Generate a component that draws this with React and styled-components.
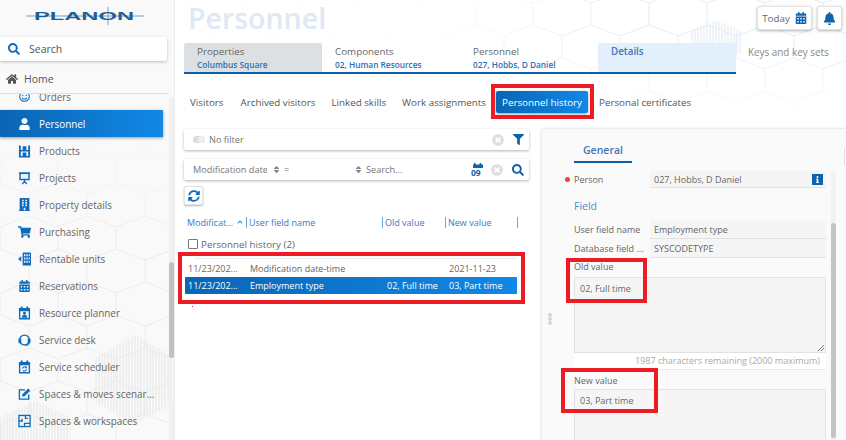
import React from 'react'
import styled, { createGlobalStyle } from 'styled-components'
import {
  FaBell, FaBuilding, FaCalendarAlt, FaChevronUp, FaFilter, FaHome, FaInfo, FaRegSmile,
  FaSearch, FaShoppingCart, FaSort, FaSyncAlt, FaTimesCircle, FaUser,
} from 'react-icons/fa'

const svgUrl = (markup) => `url("data:image/svg+xml,${encodeURIComponent(markup)}")`

// flattened hexagon tile used behind the sidebar and the page header
const hex = (stroke) =>
  svgUrl(`<svg xmlns='http://www.w3.org/2000/svg' width='58' height='66'><path d='M0 11 29 0 58 11M0 11V33M0 33 29 44 58 33M29 44V66M58 11V33' fill='none' stroke='${stroke}' stroke-width='1'/></svg>`)

const patch = (stroke, w, h) =>
  svgUrl(`<svg xmlns='http://www.w3.org/2000/svg' width='${w}' height='${h}'><defs><pattern id='p' width='3' height='3' patternUnits='userSpaceOnUse'><path d='M1 0V3' stroke='${stroke}'/></pattern></defs><polygon points='${w / 2} 0 ${w} ${h / 4} ${w} ${(h * 3) / 4} ${w / 2} ${h} 0 ${(h * 3) / 4} 0 ${h / 4}' fill='url(#p)'/></svg>`)

const GlobalStyle = createGlobalStyle`
  html, body { margin: 0; padding: 0; }
  body {
    width: 846px;
    height: 440px;
    overflow: hidden;
    font-family: "Open Sans", "Liberation Sans", sans-serif;
    font-size: 9px;
    color: #555;
    background: #fff;
  }
`

const Page = styled.div`
  position: relative;
  display: flex;
  width: 846px;
  height: 440px;
  overflow: hidden;
`

const Sidebar = styled.aside`
  flex: 0 0 175px;
  display: flex;
  flex-direction: column;
  height: 440px;
  background-color: #f9f9f9;
  background-image: linear-gradient(to bottom, #f9f9f9 120px, rgba(249, 249, 249, 0) 240px),
    ${patch('#e6e6e6', 80, 90)}, ${patch('#e6e6e6', 70, 70)}, ${hex('#ececec')};
  background-repeat: no-repeat, no-repeat, no-repeat, repeat;
  background-position: 0 0, 95px 335px, 0 400px, 0 150px;
  border-right: 1px solid #ececec;
  box-sizing: border-box;
`

const Logo = styled.div`
  height: 37px;
  display: flex;
  justify-content: center;
  padding-top: 7px;
  box-sizing: border-box;
  margin-right: 5px;
`

const SearchBox = styled.div`
  display: flex;
  align-items: center;
  gap: 9px;
  width: 167px;
  height: 24px;
  padding-left: 8px;
  box-sizing: border-box;
  background: #fff;
  border-radius: 0 3px 3px 0;
  box-shadow: 0 1px 3px rgba(0, 0, 0, 0.25);
  font-size: 10.5px;
  color: #555;
  svg { color: #0f6cbd; }
`

const HomeRow = styled.div`
  display: flex;
  align-items: center;
  gap: 6px;
  width: 169px;
  height: 33px;
  padding: 3px 0 0 6px;
  box-sizing: border-box;
  border-bottom: 1px solid #dedede;
  font-size: 10.5px;
  svg { color: #555; }
`

const NavArea = styled.div`
  flex: 1;
  display: flex;
  min-height: 0;
`

const NavList = styled.nav`
  width: 169px;
  height: 346px;
  overflow: hidden;
`

const NavTrack = styled.div`
  margin-top: 3px;
  width: 5px;
  height: 343px;
  background: #f1f1f1;
  display: flex;
  flex-direction: column;
`

const NavThumb = styled.div`
  margin-top: 165px;
  height: 96px;
  background: #c1c1c1;
  border-radius: 3px;
`

const NavItem = styled.div`
  display: flex;
  align-items: center;
  width: 163px;
  height: 27px;
  box-sizing: border-box;
  padding-left: 18px;
  gap: 8px;
  font-size: 9.9px;
  white-space: nowrap;
  color: ${(p) => (p.$active ? '#fff' : '#666')};
  background: ${(p) => (p.$active ? 'linear-gradient(90deg, #0a65b4, #1188e6)' : 'none')};
  box-shadow: ${(p) => (p.$active ? '0 1px 3px rgba(0,0,0,.4)' : 'none')};
  margin-top: ${(p) => (p.$first ? '-11px' : '0')};
  svg { flex: 0 0 13px; color: ${(p) => (p.$active ? '#fff' : '#0f6cbd')}; }
`

const Main = styled.main`
  flex: 1;
  min-width: 0;
  background-color: #fff;
  background-image: linear-gradient(to bottom, rgba(255, 255, 255, 0) 40px, #fff 125px),
    linear-gradient(to right, rgba(255, 255, 255, 0.85) 40%, rgba(255, 255, 255, 0) 70%),
    ${patch('#dfe9f2', 50, 44)}, ${hex('#e3edf6')};
  background-repeat: no-repeat, no-repeat, no-repeat, repeat;
  background-position: 0 0, 0 0, 516px 20px, 10px -8px;
  padding-left: 9px;
  position: relative;
`

const TopBar = styled.header`
  display: flex;
  justify-content: space-between;
  align-items: flex-start;
  height: 43px;
`

const Title = styled.h1`
  margin: 0 0 0 4px;
  font-size: 28.5px;
  line-height: 37px;
  font-weight: 600;
  color: #dde9f4;
`

const TopActions = styled.div`
  display: flex;
  gap: 5px;
  padding: 6px 4px 0 0;
`

const TopButton = styled.button`
  display: flex;
  align-items: center;
  justify-content: center;
  gap: 5px;
  width: ${(p) => p.$w}px;
  height: 24px;
  padding: 0;
  border: 1px solid #e2e2e2;
  border-radius: 3px;
  background: #fff;
  box-shadow: 0 1px 3px rgba(0, 0, 0, 0.3);
  font: 9.8px "Open Sans", sans-serif;
  color: #666;
  svg { color: #0f62ac; }
`

const TabStrip = styled.div`
  display: flex;
  height: 31px;
`

const TabRow = styled.div`
  display: flex;
  width: 552px;
  border-bottom: 2px solid #0a5dab;
  height: 31px;
  box-sizing: border-box;
`

const Tab = styled.div`
  width: 138px;
  height: 29px;
  box-sizing: border-box;
  padding: 2px 0 0 13px;
  border-radius: 2px 2px 0 0;
  background: ${(p) => p.$bg || 'none'};
  line-height: 14px;
  font-size: 9.8px;
  color: #666;
`

const TabLabel = styled.div`
  color: ${(p) => (p.$blue ? '#3a77b8' : '#666')};
  font-weight: ${(p) => (p.$blue ? 600 : 400)};
`

const TabSub = styled.div`
  font-size: 8.3px;
  line-height: 11px;
  font-weight: 600;
  color: #2a70b8;
`

const TabExtra = styled.div`
  padding: 2px 0 0 12px;
  font-size: 9.9px;
  line-height: 14px;
  color: #888;
  white-space: nowrap;
`

const SubTabs = styled.div`
  display: flex;
  align-items: center;
  height: 22px;
  margin-top: 17px;
  padding-left: 6px;
`

const SubTab = styled.div`
  display: flex;
  align-items: center;
  height: 22px;
  margin-right: ${(p) => p.$gap}px;
  padding: ${(p) => (p.$active ? '0 6px' : '0')};
  border-radius: 2px;
  font-size: 9.8px;
  white-space: nowrap;
  color: ${(p) => (p.$active ? '#fff' : '#555')};
  background: ${(p) => (p.$active ? 'linear-gradient(90deg, #0a65b4, #1188e6)' : 'none')};
  box-shadow: ${(p) => (p.$active ? '0 1px 3px rgba(0,0,0,.4)' : 'none')};
`

const Content = styled.div`
  display: flex;
  margin-top: 16px;
`

const ListPane = styled.section`
  flex: 0 0 345px;
`

const BarCard = styled.div`
  display: flex;
  align-items: center;
  height: 21px;
  margin-bottom: ${(p) => p.$mb || 0}px;
  padding: 0 5px 0 9px;
  background: #fff;
  border-radius: 2px;
  box-shadow: 0 1px 3px rgba(0, 0, 0, 0.3);
  font-size: 9.2px;
  color: #777;
`

const Toggle = styled.span`
  position: relative;
  width: 12px;
  height: 7px;
  margin-right: 4px;
  border-radius: 4px;
  background: #dcdcdc;

  &::after {
    content: '';
    position: absolute;
    right: 0;
    top: 0;
    width: 7px;
    height: 7px;
    border-radius: 50%;
    background: #eee;
  }
`

const Grow = styled.span`
  flex: 1;
  white-space: nowrap;
`

const ClearIcon = styled(FaTimesCircle)`
  color: #dedede;
  margin-right: 9px;
`

const BlueIcon = styled.span`
  display: flex;
  color: #0f62ac;
  margin-right: ${(p) => p.$mr || 0}px;
`

const SortSelect = styled.span`
  display: flex;
  align-items: center;
  width: ${(p) => p.$w}px;
  white-space: nowrap;
  svg { color: #888; }
`

const SortText = styled.span`
  width: 74px;
  margin-right: 5px;
  overflow: hidden;
`

const SortEq = styled.span`
  margin-left: 3px;
`

const RefreshButton = styled.button`
  display: flex;
  align-items: center;
  justify-content: center;
  width: 19px;
  height: 19px;
  margin-top: 6px;
  padding: 0;
  border: 1px solid #e4e4e4;
  border-radius: 2px;
  background: #fff;
  box-shadow: 0 1px 2px rgba(0, 0, 0, 0.3);
  color: #0f6cbd;
`

const GridHead = styled.div`
  display: grid;
  grid-template-columns: 59px 136px 63px 72px 1px;
  align-items: center;
  height: 12px;
  margin: 11px 0 0 3px;
  font-size: 9px;
  color: #3a7abd;
`

const HeadCell = styled.div`
  display: flex;
  align-items: center;
  height: 11px;
  padding-left: ${(p) => (p.$first ? 0 : 2)}px;
  border-left: ${(p) => (p.$first ? 'none' : '1px solid #6aa2d4')};
  white-space: nowrap;
  svg { margin-left: 4px; }
`

const GroupRow = styled.div`
  display: flex;
  align-items: center;
  gap: 3px;
  height: 14px;
  margin: 9px 0 0 4px;
  font-size: 9.8px;
  color: #666;
`

const Check = styled.span`
  width: 8px;
  height: 8px;
  border: 1px solid #777;
  border-radius: 1px;
  background: #fff;
`

const RowsRule = styled.div`
  height: 1px;
  margin: 7px 12px 0 10px;
  background: #e8e8e8;
`

const DataRow = styled.div`
  display: grid;
  grid-template-columns: 62px 137px 62px 1fr;
  align-items: center;
  width: 332px;
  height: ${(p) => (p.$active ? 17 : 18)}px;
  margin-left: 1px;
  padding-left: 3px;
  box-sizing: border-box;
  border-radius: 1px;
  font-size: 9px;
  white-space: nowrap;
  color: ${(p) => (p.$active ? '#fff' : '#666')};
  background: ${(p) => (p.$active ? 'linear-gradient(90deg, #0a65b4, #1188e6)' : 'none')};
`

const DetailPane = styled.section`
  position: relative;
  flex: 1;
  margin-left: 13px;
  height: 320px;
  background: #fafafa;
  box-shadow: 0 0 3px rgba(0, 0, 0, 0.2);
  padding-left: 32px;
`

const Grip = styled.div`
  position: absolute;
  left: 6px;
  top: 184px;
  width: 4px;
  height: 12px;
  background: radial-gradient(circle, #d6d6d6 1.6px, transparent 2px) 0 0 / 4px 4px;
`

const DetailTab = styled.div`
  display: inline-block;
  padding: 14px 9px 3px;
  border-bottom: 2px solid #0a5dab;
  font-size: 10.5px;
  line-height: 15px;
  font-weight: 600;
  color: #3a77b8;
  vertical-align: top;
`

const Form = styled.div`
  width: 252px;
  margin-top: 8px;
`

const Field = styled.div`
  display: grid;
  grid-template-columns: 76px 1fr;
  align-items: center;
  height: ${(p) => p.$h || 17}px;
  font-size: 9px;
  color: #666;
  position: relative;
`

const Required = styled.span`
  position: absolute;
  left: -9px;
  top: 6px;
  width: 5px;
  height: 5px;
  border-radius: 50%;
  background: #ef4438;
`

const ReadValue = styled.div`
  display: flex;
  justify-content: space-between;
  align-items: center;
  height: 100%;
  padding: 0 3px 0 4px;
  box-sizing: border-box;
  background: #f5f5f5;
  border-bottom: 1px solid #e2e2e2;
  color: #666;
  white-space: nowrap;
`

const InfoIcon = styled.span`
  display: flex;
  align-items: center;
  justify-content: center;
  width: 11px;
  height: 11px;
  background: #0f62ac;
  color: #fff;
`

const SectionName = styled.div`
  margin: 11px 0 6px;
  font-size: 10.5px;
  line-height: 15px;
  color: #4d8cc8;
`

const AreaLabel = styled.div`
  height: 16px;
  margin-top: ${(p) => p.$mt}px;
  margin-bottom: ${(p) => p.$mb}px;
  line-height: 16px;
  font-size: 9px;
  color: #666;
`

const Area = styled.div`
  position: relative;
  height: ${(p) => p.$h}px;
  padding: 4px 5px;
  box-sizing: border-box;
  background: #f5f5f5;
  border: 1px solid #e2e2e2;
  border-radius: 1px;
  font-size: 9px;
  line-height: 13px;
  color: #666;
`

const Resize = styled.svg`
  position: absolute;
  right: 0;
  bottom: 0;
`

const Remaining = styled.div`
  height: 17px;
  padding-right: 6px;
  border-bottom: 1px solid #e8e8e8;
  box-sizing: border-box;
  background: #fff;
  line-height: 16px;
  text-align: right;
  font-size: 9px;
  color: #aaa;
`

const FormTrack = styled.div`
  position: absolute;
  left: 289px;
  top: 43px;
  width: 5px;
  height: 268px;
  background: #f1f1f1;
  border-radius: 3px;
`

const FormThumb = styled.div`
  margin-top: 51px;
  height: 215px;
  background: #c4c4c4;
  border-radius: 3px;
`

const EdgeStub = styled.div`
  position: absolute;
  right: -7px;
  top: 19px;
  width: 7px;
  height: 16px;
  background: #fff;
  border: 1px solid #ddd;
  border-radius: 2px;
`

const Callout = styled.div`
  position: absolute;
  left: ${(p) => p.$x}px;
  top: ${(p) => p.$y}px;
  width: ${(p) => p.$w}px;
  height: ${(p) => p.$h}px;
  box-sizing: border-box;
  border: 4px solid #ed1c24;
  pointer-events: none;
`

const Dot = styled.div`
  position: absolute;
  left: 192px;
  top: 306px;
  width: 1px;
  height: 1px;
  background: #ed1c24;
`

const CalendarDateIcon = styled.svg`
  display: block;
`

const PlanonLogo = () => (
  <svg width="118" height="18" viewBox="0 0 118 18">
    <path d="M0 9H118" stroke="#6f9fc6" strokeWidth="1" />
    <path d="M82 0V18" stroke="#6f9fc6" strokeWidth="1" />
    <text x="8" y="13" fontFamily="Liberation Sans, sans-serif" fontWeight="700" fontSize="11" fill="#1f5f96" textLength="100" lengthAdjust="spacingAndGlyphs">
      PLANON
    </text>
  </svg>
)

const NavSvg = ({ children }) => (
  <svg width="13" height="14" viewBox="0 0 14 14" fill="currentColor">{children}</svg>
)

const ProductsIcon = () => (
  <NavSvg>
    <path d="M1 1h2v13H1zM11 1h2v13h-2zM3 6h8v1.5H3zM3 12.5h8V14H3zM5 2h4v4H5zM5 8.5h4v4H5z" />
  </NavSvg>
)

const ProjectsIcon = () => (
  <NavSvg>
    <path d="M1 1h12v1.6H1z" />
    <rect x="2.2" y="2" width="9.6" height="6.6" fill="none" stroke="currentColor" strokeWidth="1.6" />
    <path d="M7 9v2M7 10.6 4.5 13.5M7 10.6 9.5 13.5" stroke="currentColor" strokeWidth="1.4" fill="none" />
  </NavSvg>
)

const RentableIcon = () => (
  <NavSvg>
    <path d="M0 7l3.5-3v6z" />
    <path fillRule="evenodd" d="M5 0h9v14H5zM6.5 2v2h1.5V2zM9 2v2h1.5V2zM11.5 2v2h1.2V2zM6.5 5.5v2h1.5v-2zM9 5.5v2h1.5v-2zM11.5 5.5v2h1.2v-2zM6.5 9v2h1.5V9zM9 9v2h1.5V9zM11.5 9v2h1.2V9z" />
  </NavSvg>
)

const PlannerIcon = () => (
  <NavSvg>
    <path fillRule="evenodd" d="M3 0h2v1.5h4V0h2v1.5h2V14H1V1.5h2zM2.5 5v7.5h9V5z" />
    <circle cx="7" cy="7.3" r="1.6" />
    <path d="M4 12c0-2 1.3-3 3-3s3 1 3 3z" />
  </NavSvg>
)

const DeskIcon = () => (
  <NavSvg>
    <circle cx="7" cy="7" r="5.2" fill="none" stroke="currentColor" strokeWidth="1.5" />
    <rect x="0.5" y="5.5" width="3" height="5" rx="1" />
    <rect x="10.5" y="5.5" width="3" height="5" rx="1" />
    <path d="M12 10c0 2.5-2 3-4 3" fill="none" stroke="currentColor" strokeWidth="1" />
  </NavSvg>
)

const SchedulerIcon = () => (
  <NavSvg>
    <path fillRule="evenodd" d="M3 0h2v1.5h4V0h2v1.5h2V14H1V1.5h2zM2.5 5v7.5h9V5z" />
    <path d="M4.8 8.8a2.3 2.3 0 0 1 4-1.2M9.2 9.4a2.3 2.3 0 0 1-4 1.2" fill="none" stroke="currentColor" strokeWidth="1.1" />
    <path d="M9.6 6v2.4H7.2z" />
  </NavSvg>
)

const MovesIcon = () => (
  <NavSvg>
    <path d="M11.5 7.5v5H1.5V2.5h6" fill="none" stroke="currentColor" strokeWidth="1.5" />
    <path d="M4.5 7.5 11 1.2l2.2 2.2-6.5 6.3H4.5z" />
  </NavSvg>
)

const WorkspacesIcon = () => (
  <NavSvg>
    <rect x="1" y="1" width="12" height="12" fill="none" stroke="currentColor" strokeWidth="1.4" />
    <path d="M1 7h3.5V4.5M8 1v3.2h2.5M7 13V9.5h6" fill="none" stroke="currentColor" strokeWidth="1.4" />
  </NavSvg>
)

const DateSearchIcon = () => (
  <CalendarDateIcon width="13" height="13" viewBox="0 0 13 13">
    <path d="M3 0h1.6v1.4h4V0h1.6v1.4H12V5H2V1.4h1z" fill="#0f62ac" />
    <text x="0" y="12.5" fontFamily="Open Sans, sans-serif" fontWeight="700" fontSize="8.5" fill="#0f62ac">09</text>
  </CalendarDateIcon>
)

const navItems = [
  { label: 'Orders', icon: <FaRegSmile size={11} /> },
  { label: 'Personnel', icon: <FaUser size={12} />, active: true },
  { label: 'Products', icon: <ProductsIcon /> },
  { label: 'Projects', icon: <ProjectsIcon /> },
  { label: 'Property details', icon: <FaBuilding size={13} /> },
  { label: 'Purchasing', icon: <FaShoppingCart size={12} /> },
  { label: 'Rentable units', icon: <RentableIcon /> },
  { label: 'Reservations', icon: <FaCalendarAlt size={12} /> },
  { label: 'Resource planner', icon: <PlannerIcon /> },
  { label: 'Service desk', icon: <DeskIcon /> },
  { label: 'Service scheduler', icon: <SchedulerIcon /> },
  { label: 'Spaces & moves scenar...', icon: <MovesIcon /> },
  { label: 'Spaces & workspaces', icon: <WorkspacesIcon /> },
]

const subTabs = [
  { label: 'Visitors', gap: 17 },
  { label: 'Archived visitors', gap: 16 },
  { label: 'Linked skills', gap: 16 },
  { label: 'Work assignments', gap: 10 },
  { label: 'Personnel history', gap: 11, active: true },
  { label: 'Personal certificates', gap: 0 },
]

const callouts = [
  { x: 491, y: 84, w: 103, h: 35 },
  { x: 178, y: 252, w: 347, h: 52 },
  { x: 566, y: 258, w: 81, h: 45 },
  { x: 561, y: 368, w: 97, h: 45 },
]

export default function App() {
  return (
    <Page>
      <GlobalStyle />
      <Sidebar>
        <Logo><PlanonLogo /></Logo>
        <SearchBox><FaSearch size={12} />Search</SearchBox>
        <HomeRow><FaHome size={12} />Home</HomeRow>
        <NavArea>
          <NavList>
            {navItems.map((item, i) => (
              <NavItem key={item.label} $active={item.active} $first={i === 0}>
                {item.icon}
                {item.label}
              </NavItem>
            ))}
          </NavList>
          <NavTrack><NavThumb /></NavTrack>
        </NavArea>
      </Sidebar>

      <Main>
        <TopBar>
          <Title>Personnel</Title>
          <TopActions>
            <TopButton $w={55}>Today <FaCalendarAlt size={12} /></TopButton>
            <TopButton $w={25}><FaBell size={13} /></TopButton>
          </TopActions>
        </TopBar>

        <TabStrip>
          <TabRow>
            <Tab $bg="#dde0e3">
              <TabLabel>Properties</TabLabel>
              <TabSub>Columbus Square</TabSub>
            </Tab>
            <Tab>
              <TabLabel>Components</TabLabel>
              <TabSub>02, Human Resources</TabSub>
            </Tab>
            <Tab>
              <TabLabel>Personnel</TabLabel>
              <TabSub>027, Hobbs, D Daniel</TabSub>
            </Tab>
            <Tab $bg="#e3effa">
              <TabLabel $blue>Details</TabLabel>
            </Tab>
          </TabRow>
          <TabExtra>Keys and key sets</TabExtra>
        </TabStrip>

        <SubTabs>
          {subTabs.map((t) => (
            <SubTab key={t.label} $active={t.active} $gap={t.gap}>{t.label}</SubTab>
          ))}
        </SubTabs>

        <Content>
          <ListPane>
            <BarCard $mb={9}>
              <Toggle />
              <Grow>No filter</Grow>
              <ClearIcon size={12} />
              <BlueIcon><FaFilter size={11} /></BlueIcon>
            </BarCard>
            <BarCard>
              <SortSelect $w={161}>
                <SortText>Modification date</SortText>
                <FaSort size={9} />
                <SortEq>=</SortEq>
              </SortSelect>
              <SortSelect $w={12}><FaSort size={9} /></SortSelect>
              <Grow>Search...</Grow>
              <BlueIcon $mr={7}><DateSearchIcon /></BlueIcon>
              <ClearIcon size={12} />
              <BlueIcon><FaSearch size={12} /></BlueIcon>
            </BarCard>
            <RefreshButton><FaSyncAlt size={12} /></RefreshButton>

            <GridHead>
              <HeadCell $first>Modificat... <FaChevronUp size={6} /></HeadCell>
              <HeadCell>User field name</HeadCell>
              <HeadCell>Old value</HeadCell>
              <HeadCell>New value</HeadCell>
              <HeadCell />
            </GridHead>

            <GroupRow><Check />Personnel history (2)</GroupRow>
            <RowsRule />
            <DataRow>
              <span>11/23/202...</span>
              <span>Modification date-time</span>
              <span />
              <span>2021-11-23</span>
            </DataRow>
            <DataRow $active>
              <span>11/23/202...</span>
              <span>Employment type</span>
              <span>02, Full time</span>
              <span>03, Part time</span>
            </DataRow>
          </ListPane>

          <DetailPane>
            <Grip />
            <EdgeStub />
            <DetailTab>General</DetailTab>
            <Form>
              <Field>
                <Required />
                <span>Person</span>
                <ReadValue>027, Hobbs, D Daniel <InfoIcon><FaInfo size={7} /></InfoIcon></ReadValue>
              </Field>
              <SectionName>Field</SectionName>
              <Field $h={19}><span>User field name</span><ReadValue>Employment type</ReadValue></Field>
              <Field $h={19}><span>Database field ...</span><ReadValue>SYSCODETYPE</ReadValue></Field>
              <AreaLabel $mt={1} $mb={2}>Old value</AreaLabel>
              <Area $h={76}>
                02, Full time
                <Resize width="8" height="8" viewBox="0 0 8 8">
                  <path d="M1 7 7 1M4 7 7 4" stroke="#777" strokeWidth="1" />
                </Resize>
              </Area>
              <Remaining>1987 characters remaining (2000 maximum)</Remaining>
              <AreaLabel $mt={3} $mb={0}>New value</AreaLabel>
              <Area $h={60}>03, Part time</Area>
            </Form>
            <FormTrack><FormThumb /></FormTrack>
          </DetailPane>
        </Content>
      </Main>

      {callouts.map((c) => (
        <Callout key={`${c.x}-${c.y}`} $x={c.x} $y={c.y} $w={c.w} $h={c.h} />
      ))}
      <Dot />
    </Page>
  )
}
